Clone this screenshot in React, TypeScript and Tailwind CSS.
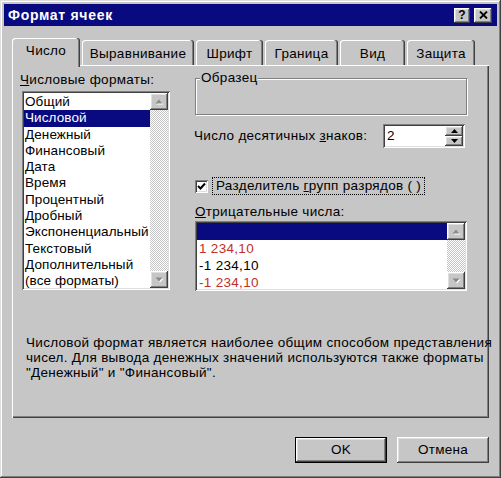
import React from "react";

const raised =
  "shadow-[inset_-1px_-1px_#404040,inset_1px_1px_#ffffff,inset_-2px_-2px_#808080,inset_2px_2px_#dfdfdf]";
const sunken =
  "shadow-[inset_1px_1px_#808080,inset_-1px_-1px_#ffffff,inset_2px_2px_#404040,inset_-2px_-2px_#dfdfdf]";
const dither =
  "bg-[image:repeating-conic-gradient(#c6c6c6_0_25%,#ffffff_0_50%)] bg-[length:2px_2px]";

const formats = [
  "Общий",
  "Числовой",
  "Денежный",
  "Финансовый",
  "Дата",
  "Время",
  "Процентный",
  "Дробный",
  "Экспоненциальный",
  "Текстовый",
  "Дополнительный",
  "(все форматы)",
];

const tabs = [
  { label: "Выравнивание", w: "w-[112px]" },
  { label: "Шрифт", w: "w-[67px]" },
  { label: "Граница", w: "w-[73px]" },
  { label: "Вид", w: "w-[65px]" },
  { label: "Защита", w: "w-[68px]" },
];

// gray triangle, disabled look
function ScrollBtn({ up }: { up: boolean }) {
  return (
    <div className={`w-[18px] h-[17px] bg-[#c6c6c6] flex items-center justify-center ${raised}`}>
      <svg width="9" height="6" viewBox="0 0 9 6">
        {up ? (
          <>
            <polygon points="1.5,5.5 8.5,5.5 5,1.5" fill="#ffffff" />
            <polygon points="0.5,4.5 7.5,4.5 4,0.5" fill="#8a8a8a" />
          </>
        ) : (
          <>
            <polygon points="1.5,1.5 8.5,1.5 5,5.5" fill="#ffffff" />
            <polygon points="0.5,0.5 7.5,0.5 4,4.5" fill="#8a8a8a" />
          </>
        )}
      </svg>
    </div>
  );
}

function SpinBtn({ up }: { up: boolean }) {
  return (
    <div className={`flex-1 bg-[#c6c6c6] flex items-center justify-center ${raised}`}>
      <svg width="7" height="4" viewBox="0 0 7 4">
        <polygon points={up ? "0,4 7,4 3.5,0" : "0,0 7,0 3.5,4"} fill="#000" />
      </svg>
    </div>
  );
}

function ScrollBar() {
  return (
    <div className={`w-[18px] h-full flex flex-col justify-between ${dither}`}>
      <ScrollBtn up />
      <ScrollBtn up={false} />
    </div>
  );
}

export default function App() {
  return (
    <div
      className="w-[501px] h-[478px] bg-[#c6c6c6] p-[4px] flex flex-col text-[13.5px] tracking-[0.3px] text-black font-['Liberation_Sans',Arial,sans-serif] shadow-[inset_-1px_-1px_#404040,inset_1px_1px_#dfdfdf,inset_-2px_-2px_#808080,inset_2px_2px_#ffffff]"
    >
      {/* title bar */}
      <div className="h-[22px] bg-[#0a0a80] flex items-center justify-between pl-[4px] pr-[5px]">
        <span className="text-white font-bold text-[14px] tracking-[0.7px]">Формат ячеек</span>
        <div className="flex gap-[4px]">
          <div className={`w-[16px] h-[15px] bg-[#c6c6c6] flex items-center justify-center font-bold text-[12px] leading-none ${raised}`}>
            ?
          </div>
          <div className={`w-[18px] h-[15px] bg-[#c6c6c6] flex items-center justify-center ${raised}`}>
            <svg width="9" height="8" viewBox="0 0 9 8">
              <path d="M1 0.5 L8 7.5 M8 0.5 L1 7.5" stroke="#000" strokeWidth="1.8" />
            </svg>
          </div>
        </div>
      </div>

      <div className="ml-[8px] mt-[12px] w-[477px]">
        {/* tab strip */}
        <div className="flex items-end gap-[2px]">
          <div className="relative z-10 -mb-[2px] w-[68px] h-[29px] bg-[#c6c6c6] rounded-t-[3px] flex items-center justify-center pb-[2px] shadow-[inset_-1px_0_#404040,inset_-2px_0_#808080,inset_1px_1px_#ffffff]">
            Число
          </div>
          {tabs.map((t) => (
            <div
              key={t.label}
              className={`${t.w} h-[25px] bg-[#c6c6c6] rounded-t-[3px] flex items-center justify-center pt-[3px] shadow-[inset_-1px_0_#404040,inset_-2px_0_#808080,inset_1px_1px_#ffffff]`}
            >
              {t.label}
            </div>
          ))}
        </div>

        {/* tab panel */}
        <div className="h-[353px] bg-[#c6c6c6] flex flex-col shadow-[inset_1px_1px_#ffffff,inset_-1px_-1px_#404040,inset_-2px_-2px_#808080]">
          <div className="flex">
            {/* left column */}
            <div className="pl-[8px] pt-[7px] flex flex-col">
              <div className="leading-[16px]">
                <u>Ч</u>исловые форматы:
              </div>
              <div className={`ml-[2px] mt-[3px] w-[148px] h-[199px] bg-white p-[2px] flex ${sunken}`}>
                <div className="flex-1 pt-[1px] overflow-hidden tracking-[0.1px]">
                  {formats.map((f, i) => (
                    <div
                      key={f}
                      className={`h-[16.3px] leading-[16.3px] pl-[1px] whitespace-nowrap ${
                        i === 1 ? "bg-[#0a0a80] text-white" : ""
                      }`}
                    >
                      {f}
                    </div>
                  ))}
                </div>
                <ScrollBar />
              </div>
            </div>

            {/* right column */}
            <div className="ml-[25px] pt-[13px] w-[272px] flex flex-col">
              <div className="relative h-[37px] border border-[#808080] shadow-[inset_1px_1px_#ffffff,1px_1px_#ffffff]">
                <span className="absolute -top-[9px] left-[4px] bg-[#c6c6c6] px-[1px] leading-[16px]">Образец</span>
              </div>

              <div className="mt-[9px] flex items-center justify-between pr-[2px]">
                <span className="-ml-[1px]">
                  Число десятичных <u>з</u>наков:
                </span>
                <div className={`w-[82px] h-[24px] bg-white p-[2px] flex ${sunken}`}>
                  <span className="flex-1 pl-[2px] leading-[20px]">2</span>
                  <div className="w-[18px] flex flex-col">
                    <SpinBtn up />
                    <SpinBtn up={false} />
                  </div>
                </div>
              </div>

              <div className="mt-[28px] flex items-center h-[20px]">
                <div className={`w-[13px] h-[13px] bg-white flex items-center justify-center ${sunken}`}>
                  <svg width="9" height="9" viewBox="0 0 9 9">
                    <path d="M1 4 L3.5 6.5 L8 1.5" stroke="#000" strokeWidth="2" fill="none" />
                  </svg>
                </div>
                <span className="ml-[4px] px-[3px] border border-dotted border-black leading-[16px]">
                  Разделитель <u>г</u>рупп разрядов ( )
                </span>
              </div>

              <div className="mt-[8px] leading-[16px]">
                <u>О</u>трицательные числа:
              </div>
              <div className={`mt-[1px] w-[272px] h-[70px] bg-white p-[2px] flex ${sunken}`}>
                <div className="flex-1 overflow-hidden">
                  <div className="h-[17px] bg-[#0a0a80]" />
                  <div className="h-[17px] leading-[17px] pl-[2px] text-[#c0302a]">1 234,10</div>
                  <div className="h-[17px] leading-[17px] pl-[2px]">-1 234,10</div>
                  <div className="h-[17px] leading-[17px] pl-[2px] text-[#c0302a]">-1 234,10</div>
                </div>
                <ScrollBar />
              </div>
            </div>
          </div>

          {/* description */}
          <div className="mt-[44px] pl-[14px] leading-[15px] whitespace-nowrap">
            <div>Числовой формат является наиболее общим способом представления</div>
            <div>чисел. Для вывода денежных значений используются также форматы</div>
            <div>"Денежный" и "Финансовый".</div>
          </div>
        </div>

        {/* buttons */}
        <div className="mt-[19px] flex justify-end gap-[10px]">
          <div className="w-[92px] h-[26px] border border-black">
            <div className={`w-full h-full flex items-center justify-center ${raised}`}>OK</div>
          </div>
          <div className={`w-[92px] h-[26px] flex items-center justify-center ${raised}`}>Отмена</div>
        </div>
      </div>
    </div>
  );
}
